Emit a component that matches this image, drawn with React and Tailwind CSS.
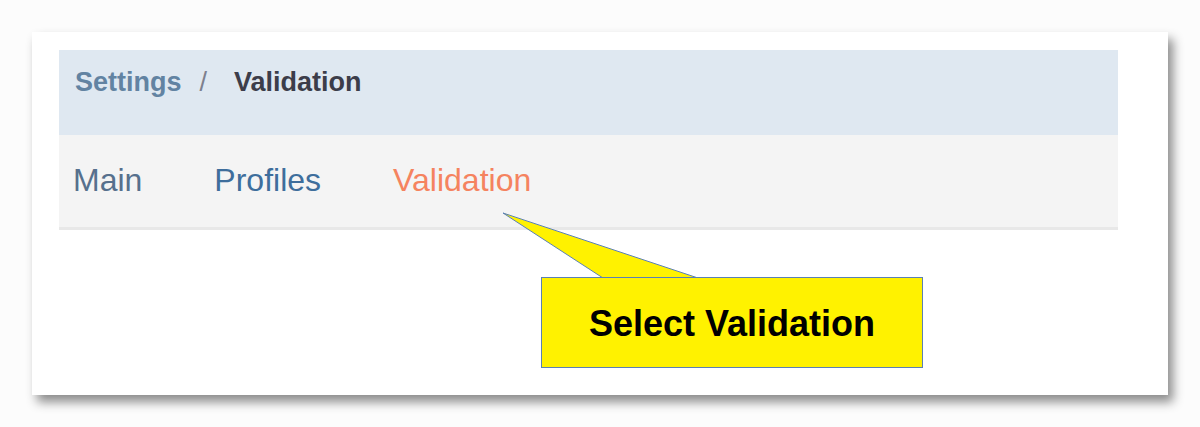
export default function App() {
  return (
    <div className="min-h-[427px] bg-[#fcfcfc] pt-[32px] pl-[32px]" style={{ fontFamily: '"Liberation Sans", Arial, sans-serif' }}>
      <div className="relative h-[363px] w-[1136px] bg-white pt-[18px] pl-[27px] shadow-[5px_7px_10px_rgba(0,0,0,0.45)]">
        <div className="w-[1059px]">
          <div className="flex h-[85px] items-start bg-[#dfe8f1] pl-[16px] pt-[17px] text-[27px] font-bold leading-[31px]">
            <span className="text-[#6283a2]">Settings</span>
            <span className="ml-[18px] font-normal text-[#7d808e]">/</span>
            <span className="ml-[27px] text-[#3c3d4a]">Validation</span>
          </div>
          <div className="flex h-[95px] gap-[72px] border-b-[3px] border-[#e8e8e8] bg-[#f4f4f4] pl-[14px] pt-[27px] text-[32px] leading-[37px]">
            <span className="text-[#56708d]">Main</span>
            <span className="text-[#3e6e9c]">Profiles</span>
            <span className="text-[#f5835f]">Validation</span>
          </div>
        </div>

        <svg className="absolute left-0 top-0" width="1136" height="363" viewBox="0 0 1136 363">
          <polygon points="471,181 571,246 666,246" fill="#fff200" stroke="#5b80b4" strokeWidth="1" />
        </svg>
        <div className="absolute left-[509px] top-[245px] flex h-[91px] w-[382px] items-center justify-center border border-[#5b80b4] bg-[#fff200] pt-[2px] text-[36px] font-bold text-black">
          Select Validation
        </div>
      </div>
    </div>
  );
}
